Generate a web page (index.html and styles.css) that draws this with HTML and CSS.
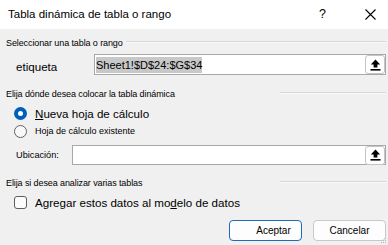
FILE: index.html
```html
<!DOCTYPE html>
<html lang="es">
<head>
<meta charset="utf-8">
<title>Tabla dinámica de tabla o rango</title>
<link rel="stylesheet" href="styles.css">
</head>
<body>
<div class="dialog">
  <div class="titlebar">
    <span class="title">Tabla dinámica de tabla o rango</span>
    <span class="help">?</span>
    <svg class="close" width="11" height="11" viewBox="0 0 11 11"><path d="M0.5 0.5 L10.5 10.5 M10.5 0.5 L0.5 10.5" stroke="#000" stroke-width="1.1" fill="none"/></svg>
  </div>
  <div class="body">
    <div class="group-head">
      <span class="group-label">Seleccionar una tabla o rango</span>
      <span class="line"></span>
    </div>
    <div class="field-row first">
      <span class="field-label big">etiqueta</span>
      <div class="input">
        <span class="value"><span class="sel">Sheet1!$D$24:$G$34</span></span>
        <button class="pick" type="button">
          <svg width="11" height="12" viewBox="0 0 11 12"><path d="M5.5 0.5 L0.8 5.4 L3.6 5.4 L3.6 8.4 L7.4 8.4 L7.4 5.4 L10.2 5.4 Z" fill="#000"/><rect x="0.5" y="10" width="10" height="1.6" fill="#000"/></svg>
        </button>
      </div>
    </div>

    <div class="group-head second">
      <span class="group-label">Elija dónde desea colocar la tabla dinámica</span>
      <span class="line short"></span>
    </div>
    <div class="option big-opt">
      <span class="radio on"></span>
      <span class="opt-text big"><u>N</u>ueva hoja de cálculo</span>
    </div>
    <div class="option small-opt">
      <span class="radio"></span>
      <span class="opt-text small">Hoja de cálculo existente</span>
    </div>
    <div class="field-row loc">
      <span class="field-label small">Ubicación:</span>
      <div class="input short-in">
        <span class="value"></span>
        <button class="pick" type="button">
          <svg width="11" height="12" viewBox="0 0 11 12"><path d="M5.5 0.5 L0.8 5.4 L3.6 5.4 L3.6 8.4 L7.4 8.4 L7.4 5.4 L10.2 5.4 Z" fill="#000"/><rect x="0.5" y="10" width="10" height="1.6" fill="#000"/></svg>
        </button>
      </div>
    </div>

    <div class="group-head third">
      <span class="group-label">Elija si desea analizar varias tablas</span>
      <span class="line short"></span>
    </div>
    <div class="option check-opt">
      <span class="checkbox"></span>
      <span class="opt-text big">Agregar estos datos al mo<u>d</u>elo de datos</span>
    </div>

    <div class="buttons">
      <button class="btn default" type="button">Aceptar</button>
      <button class="btn" type="button">Cancelar</button>
    </div>
  </div>
  <svg class="grip" width="6" height="6" viewBox="0 0 6 6"><rect x="4" y="0" width="1" height="1" fill="#b5b5b5"/><rect x="2" y="2" width="1" height="1" fill="#b5b5b5"/><rect x="4" y="2" width="1" height="1" fill="#b5b5b5"/><rect x="0" y="4" width="1" height="1" fill="#b5b5b5"/><rect x="2" y="4" width="1" height="1" fill="#b5b5b5"/><rect x="4" y="4" width="1" height="1" fill="#b5b5b5"/></svg>
</div>
</body>
</html>
```

FILE: styles.css
```css
* { box-sizing: border-box; }
html, body { margin: 0; padding: 0; }
body {
  width: 388px;
  height: 245px;
  overflow: hidden;
  background: #f0f0f0;
  font-family: "Liberation Sans", Arial, sans-serif;
  color: #000;
}
.dialog {
  position: relative;
  width: 388px;
  height: 245px;
  background: #f0f0f0;
}
.titlebar {
  height: 29px;
  background: #ffffff;
  display: flex;
  align-items: center;
  padding-left: 8px;
}
.title {
  font-size: 11.5px;
  flex: 1;
  padding-bottom: 2px;
}
.help {
  font-size: 12.5px;
  width: 10px;
  margin-right: 36px;
  padding-bottom: 2px;
}
.close {
  margin-right: 12px;
}
.body {
  padding: 0 2px 0 6px;
}
.group-head {
  display: flex;
  align-items: center;
  height: 12px;
  margin-top: 8px;
}
.group-head.second { margin-top: 13px; }
.group-head.third { margin-top: 12px; }
.group-label {
  font-size: 9px;
  white-space: nowrap;
  letter-spacing: -0.1px;
}
.line {
  flex: 1;
  height: 2px;
  border-top: 1px solid #d5d5d5;
  border-bottom: 1px solid #fbfbfb;
  margin-left: 3px;
  margin-top: -3px;
}
.line.short {
  flex: 0 0 106px;
  margin-left: auto;
}
.field-row {
  display: flex;
  align-items: center;
}
.field-row.first {
  margin-top: 5px;
}
.field-label {
  padding-left: 10px;
}
.field-label.big {
  font-size: 11.6px;
  width: 88px;
  padding-top: 3px;
}
.field-label.small {
  font-size: 9.2px;
  width: 66px;
}
.input {
  flex: 1;
  height: 21px;
  background: #fff;
  border: 1px solid #a8a8a8;
  display: flex;
  align-items: center;
  padding-left: 1px;
}
.input.short-in { height: 20px; }
.value {
  flex: 1;
  font-size: 11px;
  white-space: nowrap;
}
.sel {
  background: #c8c8c8;
  padding: 2px 0;
}
.pick {
  width: 20px;
  height: 19px;
  border: 1px solid #c4c4c4;
  border-radius: 3px;
  background: #ffffff;
  padding: 0;
  margin: 0;
  display: flex;
  align-items: center;
  justify-content: center;
}
.option {
  display: flex;
  align-items: center;
  padding-left: 8px;
}
.option.big-opt { height: 18px; margin-top: 4px; }
.option.small-opt { height: 18px; }
.field-row.loc { margin-top: 5px; }
.option.check-opt { height: 18px; margin-top: 4px; }
.radio {
  width: 13px;
  height: 13px;
  border-radius: 50%;
  border: 1px solid #626262;
  background: #f8f8f8;
  margin-right: 8px;
  flex: none;
}
.radio.on {
  border: 4px solid #005fb8;
  background: #ffffff;
}
.checkbox {
  width: 13px;
  height: 13px;
  border-radius: 3px;
  border: 1px solid #5e5e5e;
  background: #fbfbfb;
  margin-right: 8px;
  flex: none;
}
.opt-text.big { font-size: 11.6px; }
.opt-text.small { font-size: 9px; }
.buttons {
  display: flex;
  justify-content: flex-end;
  gap: 11px;
  margin-top: 9px;
}
.btn {
  width: 73px;
  height: 21px;
  border: 1px solid #c9c9c9;
  border-radius: 4px;
  background: #fdfdfd;
  font-family: "Liberation Sans", Arial, sans-serif;
  font-size: 10px;
  color: #000;
  padding: 0;
}
.btn.default {
  border-color: #1c6bbd;
  padding-left: 16px;
}
.grip {
  position: absolute;
  right: 1px;
  bottom: 1px;
}
```
